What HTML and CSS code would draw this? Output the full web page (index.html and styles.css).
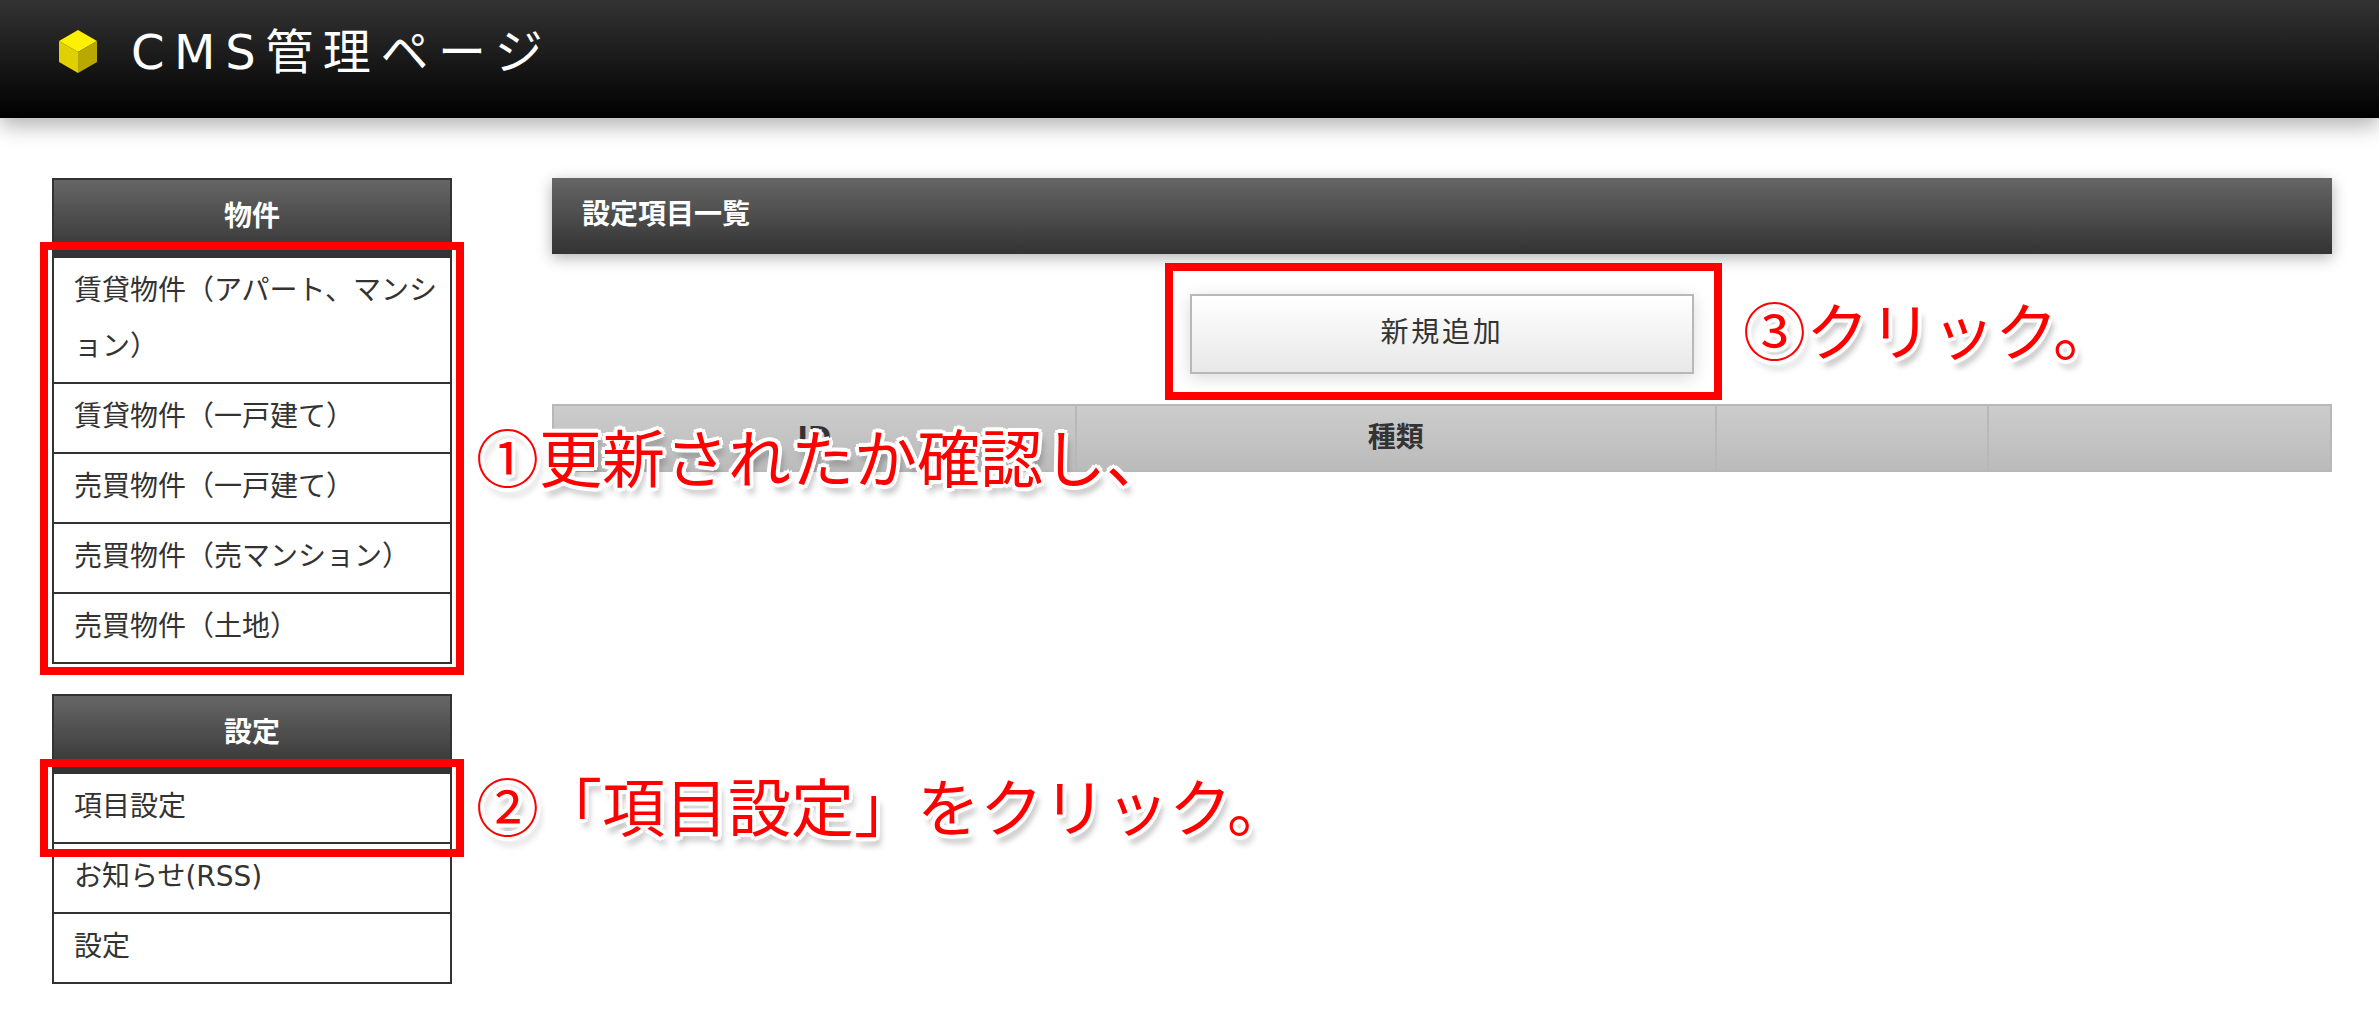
FILE: index.html
```html
<!DOCTYPE html>
<html lang="ja">
<head>
<meta charset="utf-8">
<title>CMS管理ページ</title>
<link rel="stylesheet" href="styles.css">
</head>
<body>
<header class="site-header">
  <svg class="logo" viewBox="0 0 40 44" aria-hidden="true">
    <path d="M20 0 39 11 20 22 1 11Z" fill="#fff000"/>
    <path d="M1 11 20 22V43L1 32Z" fill="#e0d000"/>
    <path d="M39 11 20 22V43L39 32Z" fill="#b8a800"/>
  </svg>
  <h1 class="site-title">CMS管理ページ</h1>
</header>
<div class="layout">
  <nav class="sidebar">
    <section class="menu">
      <h2 class="menu-title">物件</h2>
      <ul class="menu-list">
        <li><a href="#">賃貸物件（アパート、マンション）</a></li>
        <li><a href="#">賃貸物件（一戸建て）</a></li>
        <li><a href="#">売買物件（一戸建て）</a></li>
        <li><a href="#">売買物件（売マンション）</a></li>
        <li><a href="#">売買物件（土地）</a></li>
      </ul>
      <div class="mark mark-list"><span class="note">①更新されたか確認し、</span></div>
    </section>
    <section class="menu">
      <h2 class="menu-title">設定</h2>
      <ul class="menu-list">
        <li><a href="#">項目設定</a><div class="mark mark-item"><span class="note">②「項目設定」をクリック。</span></div></li>
        <li><a href="#">お知らせ(RSS)</a></li>
        <li><a href="#">設定</a></li>
      </ul>
    </section>
  </nav>
  <main class="content">
    <h2 class="content-title">設定項目一覧</h2>
    <div class="actions">
      <button class="add-button" type="button">新規追加</button>
      <div class="mark mark-button"><span class="note note-far">③クリック。</span></div>
    </div>
    <table class="items">
      <colgroup><col class="col-id"><col class="col-kind"><col class="col-edit"><col class="col-delete"></colgroup>
      <thead><tr><th scope="col">ID</th><th scope="col">種類</th><th></th><th></th></tr></thead>
    </table>
  </main>
</div>
</body>
</html>
```
FILE: styles.css
```css
* {
  box-sizing: border-box;
}

body {
  margin: 0;
  background: #fff;
  color: #333;
  font-family: "DejaVu Sans", "Noto Sans CJK JP", sans-serif;
  font-size: 28px;
  line-height: 56px;
}

h1, h2, ul {
  margin: 0;
  padding: 0;
}

.site-header {
  display: flex;
  align-items: center;
  gap: 33px;
  height: 118px;
  padding: 0 58px 14px;
  background: linear-gradient(#333, #000);
  box-shadow: 0 8px 20px rgba(0, 0, 0, 0.3);
}

.logo {
  width: 40px;
  height: 44px;
}

.site-title {
  color: #fff;
  font-size: 48px;
  font-weight: 400;
  letter-spacing: 0.2em;
}

.layout {
  display: flex;
  align-items: flex-start;
  gap: 100px;
  padding: 60px 47px 48px 52px;
}

.sidebar {
  display: flex;
  flex: 0 0 400px;
  flex-direction: column;
  gap: 30px;
}

.menu {
  position: relative;
  border: 2px solid #333;
  border-bottom: 0;
}

.menu-title {
  padding: 9px 0 5px;
  border-bottom: 8px solid #333;
  background: linear-gradient(#666, #383838);
  color: #fff;
  font-size: 28px;
  text-align: center;
}

.menu-list {
  list-style: none;
}

.menu-list li {
  position: relative;
  border-bottom: 2px solid #333;
}

.menu-list a {
  display: block;
  padding: 5px 10px 7px 20px;
  color: #333;
  line-break: normal;
  text-decoration: none;
}

.content {
  flex: 1;
  min-width: 0;
}

.content-title {
  padding: 9px 30px 11px;
  background: linear-gradient(#666, #333);
  box-shadow: 0 4px 14px rgba(0, 0, 0, 0.3);
  color: #fff;
  font-size: 28px;
}

.actions {
  position: relative;
  display: flex;
  justify-content: center;
  width: 504px;
  margin: 40px auto 30px;
}

.add-button {
  width: 100%;
  height: 80px;
  padding: 0 0 2px;
  border: 2px solid #b8b8b8;
  background: linear-gradient(#fff, #e8e8e8);
  box-shadow: 0 4px 16px rgba(0, 0, 0, 0.15);
  color: #333;
  font: inherit;
  letter-spacing: 0.1em;
}

.items {
  width: 100%;
  border-collapse: collapse;
  table-layout: fixed;
}

.items th {
  height: 66px;
  padding: 4px 0;
  border: 2px solid #b8b8b8;
  background: linear-gradient(#ccc, #bbb);
}

.col-id { width: 29.4%; }
.col-kind { width: 36%; }
.col-edit { width: 15.3%; }

/* Red frames and captions that lie over the page */
.mark {
  position: absolute;
  z-index: 1;
  border: 8px solid #f00;
  pointer-events: none;
}

.mark-list { inset: 62px -14px -11px; }
.mark-item { inset: -15px -14px -15px; }
.mark-button { inset: -31px -28px -26px -25px; }

.note {
  position: absolute;
  top: 50%;
  left: 100%;
  margin: -36px 0 0 20px;
  color: #f00;
  font-family: "Noto Sans CJK JP", sans-serif;
  font-size: 63px;
  line-height: 64px;
  white-space: nowrap;
  text-shadow:
    4px 0 #fff, -4px 0 #fff, 0 4px #fff, 0 -4px #fff,
    3px 3px #fff, -3px 3px #fff, 3px -3px #fff, -3px -3px #fff,
    4px 8px 6px rgba(0, 0, 0, 0.3);
}

.note-far {
  margin-left: 29px;
}
```
